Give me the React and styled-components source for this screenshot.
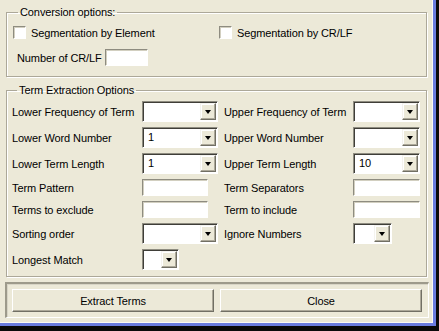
import React from 'react';
import styled, { createGlobalStyle } from 'styled-components';

const Global = createGlobalStyle`
  html, body {
    margin: 0;
    padding: 0;
    background: #0a0a0a;
  }
  body {
    font-family: "Liberation Sans", Arial, sans-serif;
    font-size: 11px;
    letter-spacing: -0.1px;
    color: #000;
  }
`;

const Window = styled.div`
  width: 428px;
  height: 317px;
  padding: 6px 0 0 5px;
  background: #ece9d8;
  border-right: 3px solid #6a7ce0;
  border-bottom: 3px solid #6a7ce0;
  box-shadow: inset -1px -1px 0 #fbfaf6;
  display: flex;
  flex-direction: column;
`;

const Group = styled.fieldset`
  margin: ${p => p.$top || 0}px 0 0 1px;
  padding: ${p => p.$pad};
  width: 421px;
  box-sizing: border-box;
  min-width: 0;
  border: 1px solid #aca899;
  box-shadow: 1px 1px 0 #fff, inset 1px 1px 0 #fff;
`;

const Legend = styled.legend`
  margin-left: 5px;
  padding: 0 2px;
  line-height: 13px;
`;

const CheckRow = styled.div`
  display: flex;
  height: 13px;
  align-items: center;
`;

const CheckItem = styled.label`
  display: flex;
  align-items: center;
  gap: 5px;
  width: ${p => p.$w}px;
  white-space: nowrap;
`;

const Box = styled.span`
  width: 13px;
  height: 13px;
  box-sizing: border-box;
  background: #fff;
  border-top: 1px solid #8e8c80;
  border-left: 1px solid #8e8c80;
  border-right: 1px solid #fff;
  border-bottom: 1px solid #fff;
  box-shadow: inset 1px 1px 0 #d2cfc0;
`;

const CountRow = styled.div`
  display: flex;
  align-items: center;
  gap: 3px;
  margin-top: 10px;
  padding-left: 4px;
`;

const Field = styled.div`
  width: ${p => p.$w}px;
  height: ${p => p.$h || 17}px;
  box-sizing: border-box;
  background: #fff;
  border-top: 1px solid #8e8c80;
  border-left: 1px solid #8e8c80;
  border-right: 1px solid #fff;
  border-bottom: 1px solid #fff;
  box-shadow: inset 1px 1px 0 #d2cfc0;
`;

const Combo = styled.div`
  width: ${p => p.$w}px;
  height: 21px;
  box-sizing: border-box;
  background: #fff;
  color: #000;
  border-top: 1px solid #8e8c80;
  border-left: 1px solid #8e8c80;
  border-right: 1px solid #fff;
  border-bottom: 1px solid #fff;
  box-shadow: inset 1px 1px 0 #3f3e38;
  display: flex;
  align-items: center;
  padding: 1px;
`;

const ComboText = styled.span`
  flex: 1;
  padding-left: 4px;
  line-height: 17px;
`;

const Arrow = styled.span`
  width: 16px;
  height: 17px;
  box-sizing: border-box;
  background: #ece9d8;
  border-top: 1px solid #f4f3ee;
  border-left: 1px solid #f4f3ee;
  border-right: 1px solid #716f64;
  border-bottom: 1px solid #716f64;
  box-shadow: inset -1px -1px 0 #aca899, inset 1px 1px 0 #fff;
  display: flex;
  align-items: center;
  justify-content: center;
  &::after {
    content: "";
    border-left: 3.5px solid transparent;
    border-right: 3.5px solid transparent;
    border-top: 4px solid #000;
    margin-top: 1px;
  }
`;

const Grid = styled.div`
  display: grid;
  grid-template-columns: 130px 82px 129px 67px;
  row-gap: 5px;
  align-items: center;
`;

const Label = styled.span`
  white-space: nowrap;
`;

const ButtonPanel = styled.div`
  margin-top: 5px;
  width: 424px;
  box-sizing: border-box;
  border-top: 2px solid #9d9a8b;
  border-left: 2px solid #9d9a8b;
  border-right: 1px solid #fff;
  border-bottom: 1px solid #fff;
  box-shadow: inset 1px 1px 0 #d8d5c6;
  padding: 5px 6px 5px 5px;
  display: flex;
  gap: 6px;
`;

const Button = styled.button`
  flex: 1;
  height: 23px;
  font: inherit;
  letter-spacing: inherit;
  color: #000;
  background: #ece9d8;
  border-top: 1px solid #fff;
  border-left: 1px solid #fff;
  border-right: 1px solid #716f64;
  border-bottom: 1px solid #716f64;
  box-shadow: inset -1px -1px 0 #aca899;
  padding: 0;
`;

const ComboBox = ({ w, value }) => (
  <Combo $w={w}>
    <ComboText>{value}</ComboText>
    <Arrow />
  </Combo>
);

const App = () => {
  return (
    <Window>
      <Global />
      <Group $pad="7px 6px 10px 6px">
        <Legend>Conversion options:</Legend>
        <CheckRow>
          <CheckItem $w={206}>
            <Box />
            Segmentation by Element
          </CheckItem>
          <CheckItem>
            <Box />
            Segmentation by CR/LF
          </CheckItem>
        </CheckRow>
        <CountRow>
          Number of CR/LF
          <Field $w={43} />
        </CountRow>
      </Group>

      <Group $top={7} $pad="4px 5px 6px 5px">
        <Legend>Term Extraction Options</Legend>
        <Grid>
          <Label>Lower Frequency of Term</Label>
          <ComboBox w={76} />
          <Label>Upper Frequency of Term</Label>
          <ComboBox w={67} />

          <Label>Lower Word Number</Label>
          <ComboBox w={76} value="1" />
          <Label>Upper Word Number</Label>
          <ComboBox w={67} />

          <Label>Lower Term Length</Label>
          <ComboBox w={76} value="1" />
          <Label>Upper Term Length</Label>
          <ComboBox w={67} value="10" />

          <Label>Term Pattern</Label>
          <Field $w={66} />
          <Label>Term Separators</Label>
          <Field $w={67} />

          <Label>Terms to exclude</Label>
          <Field $w={66} />
          <Label>Term to include</Label>
          <Field $w={67} />

          <Label>Sorting order</Label>
          <ComboBox w={76} />
          <Label>Ignore Numbers</Label>
          <ComboBox w={39} />

          <Label>Longest Match</Label>
          <ComboBox w={37} />
        </Grid>
      </Group>

      <ButtonPanel>
        <Button>Extract Terms</Button>
        <Button>Close</Button>
      </ButtonPanel>
    </Window>
  );
};

export default App;
